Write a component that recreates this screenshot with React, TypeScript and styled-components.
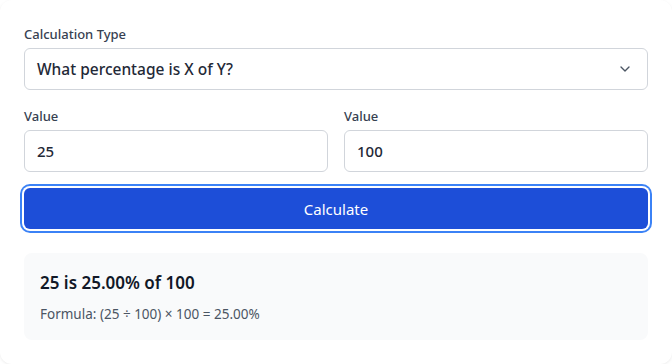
import { styled, createGlobalStyle } from 'styled-components'
import { ChevronDown } from 'lucide-react'
import { useState } from 'react'

const GlobalStyle = createGlobalStyle`
  * { box-sizing: border-box; }
  body {
    margin: 0;
    background: #ffffff;
    font-family: 'Noto Sans', 'Open Sans', sans-serif;
  }
`

const Card = styled.div`
  width: 672px;
  height: 364px;
  background: #fff;
  border-radius: 12px;
  box-shadow: 0 1px 3px rgba(0, 0, 0, 0.08);
  padding: 25px 24px 24px;
  display: flex;
  flex-direction: column;
`

const Field = styled.div`
  display: flex;
  flex-direction: column;
  gap: 5px;
`

const Label = styled.label`
  font-size: 13px;
  font-weight: 500;
  color: #374151;
  line-height: 18px;
`

const SelectBox = styled.div`
  height: 42px;
  border: 1px solid #d1d5db;
  border-radius: 6px;
  display: flex;
  align-items: center;
  justify-content: space-between;
  padding: 0 12px;
  font-size: 15.5px;
  font-weight: 500;
  color: #1f2937;
`

const Chevron = styled(ChevronDown)`
  width: 16px;
  height: 16px;
  color: #4b5563;
  margin-right: 2px;
`

const Row = styled.div`
  display: grid;
  grid-template-columns: 1fr 1fr;
  gap: 16px;
  margin-top: 17px;
`

const Input = styled.input`
  height: 42px;
  border: 1px solid #d1d5db;
  border-radius: 6px;
  padding: 0 12px;
  font-family: inherit;
  font-size: 15px;
  font-weight: 500;
  color: #1f2937;
  outline: none;
  width: 100%;
`

const Button = styled.button`
  margin-top: 16px;
  height: 41px;
  width: 100%;
  border: none;
  border-radius: 6px;
  background: #1d4ed8;
  color: #fff;
  font-family: inherit;
  font-size: 15px;
  box-shadow: 0 0 0 2px #fff, 0 0 0 4px #3b82f6;
  cursor: pointer;
`

const Result = styled.div`
  margin-top: 24px;
  background: #f9fafb;
  border-radius: 8px;
  padding: 17px 16px 16px;
  display: flex;
  flex-direction: column;
  gap: 8px;
`

const ResultTitle = styled.div`
  font-size: 17px;
  font-weight: 600;
  color: #111827;
  line-height: 26px;
`

const Formula = styled.div`
  font-size: 13.5px;
  color: #4b5563;
  line-height: 20px;
`

export default function App() {
  const [x, setX] = useState('25')
  const [y, setY] = useState('100')

  return (
    <>
      <GlobalStyle />
      <Card>
        <Field>
          <Label>Calculation Type</Label>
          <SelectBox>
            <span>What percentage is X of Y?</span>
            <Chevron strokeWidth={2} />
          </SelectBox>
        </Field>
        <Row>
          <Field>
            <Label>Value</Label>
            <Input value={x} onChange={(e) => setX(e.target.value)} />
          </Field>
          <Field>
            <Label>Value</Label>
            <Input value={y} onChange={(e) => setY(e.target.value)} />
          </Field>
        </Row>
        <Button>Calculate</Button>
        <Result>
          <ResultTitle>25 is 25.00% of 100</ResultTitle>
          <Formula>Formula: (25 ÷ 100) × 100 = 25.00%</Formula>
        </Result>
      </Card>
    </>
  )
}
